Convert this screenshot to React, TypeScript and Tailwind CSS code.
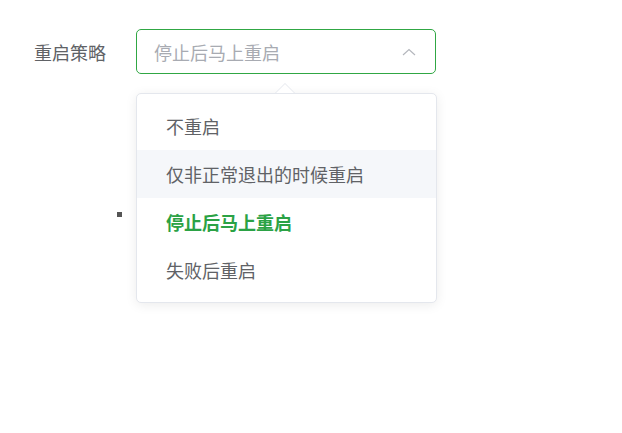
import React from "react";

const items = [
  { label: "不重启", state: "normal" },
  { label: "仅非正常退出的时候重启", state: "hover" },
  { label: "停止后马上重启", state: "selected" },
  { label: "失败后重启", state: "normal" },
];

export default function App() {
  return (
    <div
      className="relative w-[622px] h-[433px] bg-white"
      style={{ fontFamily: '"Noto Sans CJK SC", "Noto Sans", sans-serif' }}
    >
      <div className="flex items-center pt-[29px] pl-[34px]">
        <div className="w-[102px] text-[18px] text-[#606266] leading-none">重启策略</div>
        <div className="relative w-[300px] h-[45px] rounded-[5px] border border-[#30a744] flex items-center pl-[17px] pr-[19px]">
          <span className="flex-1 text-[18px] text-[#a8abb2] leading-none">停止后马上重启</span>
          <svg width="14" height="8" viewBox="0 0 14 8" fill="none">
            <path d="M1 7 L7 1.5 L13 7" stroke="#b4b7bd" strokeWidth="1.2" />
          </svg>
          <div className="absolute left-[-1px] top-[63px] w-[301px] z-10">
            <div className="absolute left-[139px] -top-[10px] w-0 h-0 border-x-[10px] border-x-transparent border-b-[10px] border-b-[#e4e7ed]" />
            <div className="absolute left-[140px] -top-[9px] w-0 h-0 border-x-[9px] border-x-transparent border-b-[9px] border-b-white" />
            <div className="bg-white border border-[#e4e7ed] rounded-[5px] shadow-[0_2px_12px_rgba(0,0,0,0.08)] py-[8px]">
              {items.map((it) => (
                <div
                  key={it.label}
                  className={
                    "h-[48px] flex items-center pl-[29px] text-[18px] leading-none " +
                    (it.state === "hover"
                      ? "bg-[#f5f7fa] text-[#606266]"
                      : it.state === "selected"
                      ? "text-[#2ba245] font-bold"
                      : "text-[#606266]")
                  }
                >
                  {it.label}
                </div>
              ))}
            </div>
          </div>
        </div>
      </div>
      <div className="ml-[117px] mt-[138px] w-[5px] h-[5px] bg-[#555]" />
    </div>
  );
}
